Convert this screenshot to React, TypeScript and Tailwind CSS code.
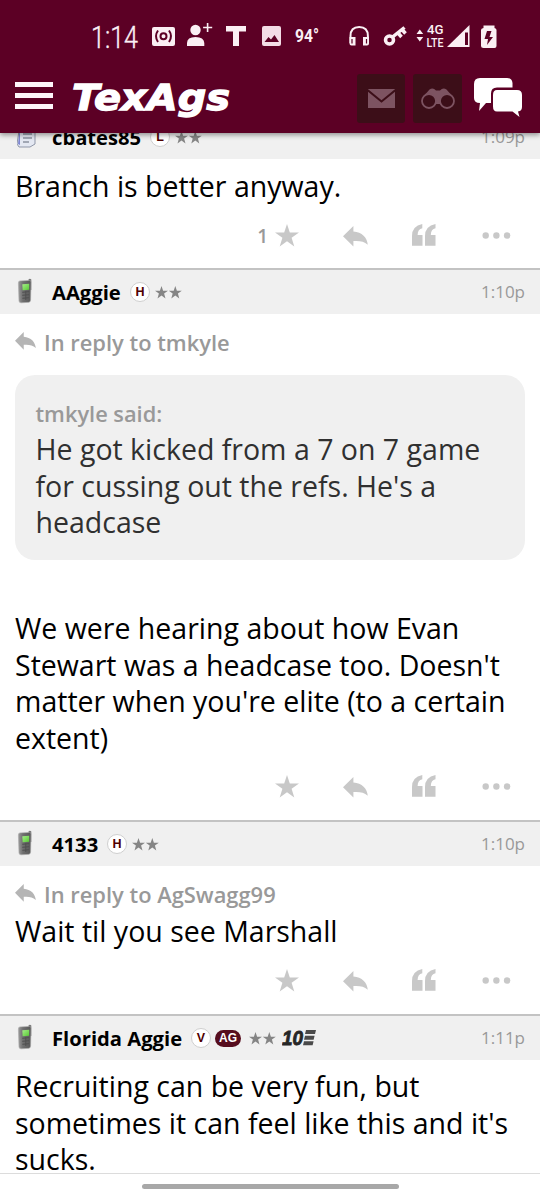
import React from "react";

const Stars = () => (
  <svg width="27" height="13" viewBox="0 0 27 13" fill="#858585">
    <path d="M6.5 0 8.1 4.7H13L9.1 7.6 10.5 12.4 6.5 9.5 2.5 12.4 3.9 7.6 0 4.7H4.9Z" />
    <path d="M20.3 0 21.9 4.7H26.8L22.9 7.6 24.3 12.4 20.3 9.5 16.3 12.4 17.7 7.6 13.8 4.7H18.7Z" />
  </svg>
);

const Reply = ({ className }: { className: string }) => (
  <svg className={className} viewBox="0 0 25 21" preserveAspectRatio="none">
    <path fill="currentColor" d="M0 10.3 10.4 0V5.4C19 6 24.2 11.5 24.8 18.8 21 15.2 16.5 14.6 10.4 15V20.6Z" />
  </svg>
);

const Phone = () => (
  <svg width="16" height="26" viewBox="0 0 16 26">
    <defs>
      <linearGradient id="case" x1="0" x2="1">
        <stop offset="0" stopColor="#9a9a9a" />
        <stop offset=".35" stopColor="#707070" />
        <stop offset="1" stopColor="#585858" />
      </linearGradient>
      <linearGradient id="screen" x1="0" y1="0" x2="1" y2="1">
        <stop offset="0" stopColor="#a8ee8c" />
        <stop offset="1" stopColor="#58c934" />
      </linearGradient>
    </defs>
    <path d="M11.5 1.5q1.3-1.6 2.8 0V12h-2.8z" fill="#777" />
    <path d="M3 2.9 12.6 2.4Q14 2.4 14 4L13.6 22Q13.4 24 12 24.3L4 24.8Q2.2 24.8 2 23L1.4 5Q1.4 2.9 3 2.9Z" fill="url(#case)" stroke="#a8a8a8" strokeWidth=".6" />
    <path d="m5.3 6.2 6.9-.5-.1 6-6.5.5z" fill="url(#screen)" />
    <path d="m5.3 14.3 6.8-.7M5.3 17.3l6.8-.6M5.4 20.3l6.5-.6M8.8 13v9" stroke="#505050" />
  </svg>
);

const Note = () => (
  <svg width="20" height="26" viewBox="0 0 20 26">
    <path d="M3 1 18 2v19l-5 3L2 24 0 21z" fill="#e4e8f2" stroke="#8f96a8" />
    <path d="M1 21 3 2v20z" fill="#7e86d0" />
    <path d="M6 7h9M6 11h9M6 15h9M6 19h6" stroke="#8b91a0" strokeWidth="1.4" />
  </svg>
);

const Ten = () => (
  <svg width="34" height="16" viewBox="0 0 34 16">
    <text x="0" y="15" fontFamily="Liberation Sans" fontWeight="bold" fontStyle="italic" fontSize="20" textLength="21" lengthAdjust="spacingAndGlyphs" fill="#262626" stroke="#262626" strokeWidth=".8">10</text>
    <path d="M24 0h10l-1 4H23zM23 5.7h9.6l-1 4H22zM22 11.3h9.6l-1 4H21z" fill="#4a4a4a" />
  </svg>
);

const Badge = ({ children }: { children: string }) => (
  <span className="flex h-5 w-5 items-center justify-center rounded-full border border-[#cfcfcf] bg-white font-['Liberation_Sans'] text-[12.5px] leading-none font-bold text-[#500000]">
    {children}
  </span>
);

const Actions = ({ count }: { count?: string }) => (
  <div className="flex h-[26px] items-center text-[#c8c8c8]">
    <span className="w-[268px] text-right text-[19px] leading-6 font-semibold text-[#999]">{count}</span>
    <svg className="mb-px ml-[7px]" width="24" height="23" viewBox="0 0 24 23">
      <path fill="currentColor" d="M12 0 14.8 8.5H24L16.6 13.8 19.3 22.6 12 17.3 4.7 22.6 7.4 13.8 0 8.5H9.2Z" />
    </svg>
    <Reply className="ml-[44px] h-[21px] w-[25px]" />
    <svg className="mb-[3px] ml-[44px]" width="24" height="22" viewBox="0 0 24 22" fill="currentColor">
      <path d="M10.3 0V4.2Q5.8 5 5.6 10.9H10.5V21.8H0V12Q0 2 10.3 0Z" />
      <path d="M23.5 0V4.2Q19 5 18.8 10.9H23.5V21.8H13V12Q13 2 23.5 0Z" />
    </svg>
    <svg className="mb-[2px] ml-[46px]" width="29" height="7" viewBox="0 0 29 7" fill="currentColor">
      <circle cx="3.7" cy="3.5" r="3.2" />
      <circle cx="14.4" cy="3.5" r="3.2" />
      <circle cx="25.1" cy="3.5" r="3.2" />
    </svg>
  </div>
);

type HeadProps = { name: string; nameWidth: string; time: string; icon?: React.ReactNode; children: React.ReactNode };

const Head = ({ name, nameWidth, time, icon, children }: HeadProps) => (
  <div className="flex h-[46px] items-center border-t-2 border-[#c3c3c3] bg-[#f0f0f0] pr-[15px] pl-[17px]">
    <div className="mb-[3px] flex w-[35px]">{icon ?? <Phone />}</div>
    <span className={`mb-px text-[20.2px] leading-6 font-bold whitespace-nowrap text-black ${nameWidth}`}>{name}</span>
    {children}
    <span className="mb-px ml-auto text-[17px] leading-6 text-[#999]">{time}</span>
  </div>
);

const ReplyTo = ({ children }: { children: string }) => (
  <div className="flex h-8 items-center text-[21.9px] font-semibold text-[#999]">
    <Reply className="mr-[8px] mb-1 h-[18px] w-[21px] text-[#b5b5b5]" />
    <span>{children}</span>
  </div>
);

const StatusBar = () => (
  <svg className="block" width="540" height="65" viewBox="0 0 540 65" fill="#fbeff4">
    <text x="91" y="48" fontFamily="Roboto" fontWeight="300" fontSize="31" textLength="47" lengthAdjust="spacingAndGlyphs" stroke="#fbeff4" strokeWidth=".4">1:14</text>
    <rect x="152" y="27" width="23" height="19" rx="2" />
    <g fill="none" stroke="#5c0025" strokeWidth="2">
      <circle cx="163.5" cy="36.2" r="3" />
      <path d="M158 30.5q-4 5.7 0 11.5M169 30.5q4 5.7 0 11.5" />
    </g>
    <circle cx="195.5" cy="30" r="5.2" />
    <path d="M187 46v-3q0-6 8.5-6t8.8 6v3zM206.8 23h1.6v3.7h3.8v1.6h-3.8V32h-1.6v-3.7h-3.7v-1.6h3.7z" />
    <path d="M226 26h20v5.5h-7V46h-6V31.5h-7z" />
    <rect x="262" y="26" width="19" height="20" rx="2" fill="#f3dce6" />
    <path d="m264.5 42 4-5 2.5 2.5 3.5-4.5 4.5 7z" fill="#5c0025" />
    <text x="295" y="42" fontFamily="Roboto" fontWeight="700" fontSize="17.5" textLength="24" lengthAdjust="spacingAndGlyphs">94°</text>
    <path d="M350.5 43v-7q0-9 8.7-9t8.7 9v7" fill="none" stroke="#fbeff4" strokeWidth="2" />
    <path d="M349.5 37h6v8.5h-4q-2 0-2-2zM363 37h6v6.5q0 2-2 2h-4z" />
    <path d="M352 39v4.5M366.5 39v4.5" stroke="#5c0025" strokeWidth="1.2" />
    <g fill="none" stroke="#fbeff4">
      <circle cx="389.5" cy="40" r="4" strokeWidth="3.5" />
      <path d="m392.5 37 12-9.5M398 33l3.5 4M402 29.5l3.5 4" strokeWidth="3.5" />
    </g>
    <path d="m416.5 34 3.3-4.5 3.4 4.5zM416.5 37h6.7l-3.4 4.5z" />
    <text x="427" y="34.3" fontFamily="Roboto" fontWeight="500" fontSize="12.5" textLength="16.5" lengthAdjust="spacingAndGlyphs">4G</text>
    <text x="426.5" y="46.5" fontFamily="Roboto" fontWeight="500" fontSize="12.5" textLength="17" lengthAdjust="spacingAndGlyphs">LTE</text>
    <path d="M447 47 469.5 25V47z" />
    <path d="M465 32.5h3V45h-3z" fill="#5c0025" />
    <path d="M483.5 25.5h11V28q2 .3 2 2v16q0 2-2 2h-11q-2.500 0-2.500-2V30q0-1.700 2.500-2z" />
    <path d="m487 31-2.500 8h3.500l-1 6 6-8h-3.500l2-6z" fill="#5c0025" />
  </svg>
);

const Header = () => (
  <header className="relative z-10 h-[133px] bg-[#5c0025] shadow-[0_2px_5px_rgba(0,0,0,0.4)]">
    <StatusBar />
    <div className="flex h-[66px] items-center pl-[15px]">
      <div className="flex w-[38px] flex-col gap-[6px] pb-[5px]">
        <i className="h-[5px] bg-[#fff5fa]" />
        <i className="h-[5px] bg-[#fff5fa]" />
        <i className="h-[5px] bg-[#fff5fa]" />
      </div>
      <svg className="ml-[18px]" width="161" height="44" viewBox="0 0 161 44" fill="#fff">
        <text x="1" y="33.5" fontFamily="DejaVu Sans" fontWeight="bold" fontStyle="italic" fontSize="36" textLength="158" lengthAdjust="spacingAndGlyphs" stroke="#fff" strokeWidth="1.3">TexAgs</text>
      </svg>
      <div className="ml-[125px] flex gap-[8px]">
        <div className="flex h-[49px] w-[48px] items-center justify-center rounded-[3px] bg-[#3c0e18]">
          <svg width="27" height="19" viewBox="0 0 27 19">
            <path d="M0 0h27v19H0z" fill="#7d5361" />
            <path d="M-.5 1 13.5 12.5 27.5 1" fill="none" stroke="#3c0e18" strokeWidth="2" />
          </svg>
        </div>
        <div className="flex h-[49px] w-[49px] items-center justify-center rounded-[3px] bg-[#3c0e18]">
          <svg width="34" height="21" viewBox="0 0 34 21">
            <path d="M2 9 8.5 1.5Q12-1 15 2.5h4Q22-1 25.5 1.5L32 9 20 16h-6z" fill="#7d5361" />
            <g fill="#3c0e18" stroke="#7d5361" strokeWidth="1.8">
              <circle cx="8" cy="13" r="7" />
              <circle cx="26" cy="13" r="7" />
            </g>
          </svg>
        </div>
      </div>
      <svg className="mb-px ml-[12px]" width="48" height="39" viewBox="0 0 48 39" fill="#fff">
        <path d="M6 0h27q5 0 5.5 5v4.5H23q-6 0-6 6V25h-5L5 33l1-8q-6 0-6-5V6q0-6 6-6z" />
        <path d="M23 12h20q5 0 5 5v12q0 4-4 4.5l1.5 5.5-7-5.5H23q-4 0-4-5V17q0-5 4-5z" />
      </svg>
    </div>
  </header>
);

export default function App() {
  return (
    <div className="flex h-[1200px] w-[540px] flex-col overflow-hidden bg-white font-['Open_Sans',sans-serif] text-black">
      <Header />
      <main className="-mt-[20px] h-[1060px] shrink-0 overflow-hidden text-[28.5px] leading-[36.6px]">
        <article className="h-[155px]">
          <Head name="cbates85" nameWidth="w-[98px]" time="1:09p" icon={<Note />}>
            <Badge>L</Badge>
            <span className="ml-[5px]"><Stars /></span>
          </Head>
          <p className="h-[64px] pt-[9px] pl-[15px]">Branch is better anyway.</p>
          <Actions count="1" />
        </article>

        <article className="h-[552px]">
          <Head name="AAggie" nameWidth="w-[78px]" time="1:10p">
            <Badge>H</Badge>
            <span className="ml-[5px]"><Stars /></span>
          </Head>
          <div className="h-[460px] px-[15px] pt-[13px]">
            <ReplyTo>In reply to tmkyle</ReplyTo>
            <blockquote className="mt-[16px] h-[185px] rounded-[20px] bg-[#f0f0f0] pt-[23px] pl-[20.5px] text-[#303030]">
              <div className="h-[33px] text-[21.8px] leading-[31px] font-semibold text-[#999]">tmkyle said:</div>
              <p>He got kicked from a 7 on 7 game<br />for cussing out the refs. He's a<br />headcase</p>
            </blockquote>
            <p className="mt-[50px] whitespace-nowrap">We were hearing about how Evan<br />Stewart was a headcase too. Doesn't<br />matter when you're elite (to a certain<br />extent)</p>
          </div>
          <Actions />
        </article>

        <article className="h-[194px]">
          <Head name="4133" nameWidth="w-[55px]" time="1:10p">
            <Badge>H</Badge>
            <span className="ml-[5px]"><Stars /></span>
          </Head>
          <div className="h-[102px] px-[15px] pt-[13px]">
            <ReplyTo>In reply to AgSwagg99</ReplyTo>
            <p className="mt-[2px]">Wait til you see Marshall</p>
          </div>
          <Actions />
        </article>

        <article>
          <Head name="Florida Aggie" nameWidth="w-[139px]" time="1:11p">
            <Badge>V</Badge>
            <span className="ml-[4px] flex h-[17px] w-[26px] items-center justify-center rounded-full bg-[#560d1e] font-['Liberation_Sans'] text-[12px] leading-none font-bold text-white">AG</span>
            <span className="ml-[8px]"><Stars /></span>
            <span className="ml-[6px]"><Ten /></span>
          </Head>
          <p className="pt-[8px] pl-[15px] whitespace-nowrap">Recruiting can be very fun, but<br />sometimes it can feel like this and it's<br />sucks.</p>
        </article>
      </main>
      <footer className="flex h-[27px] shrink-0 justify-center border-t border-[#dcdcdc] bg-white pt-[10px]">
        <div className="h-[5px] w-[257px] rounded-full bg-[#a8a8a8]" />
      </footer>
    </div>
  );
}
